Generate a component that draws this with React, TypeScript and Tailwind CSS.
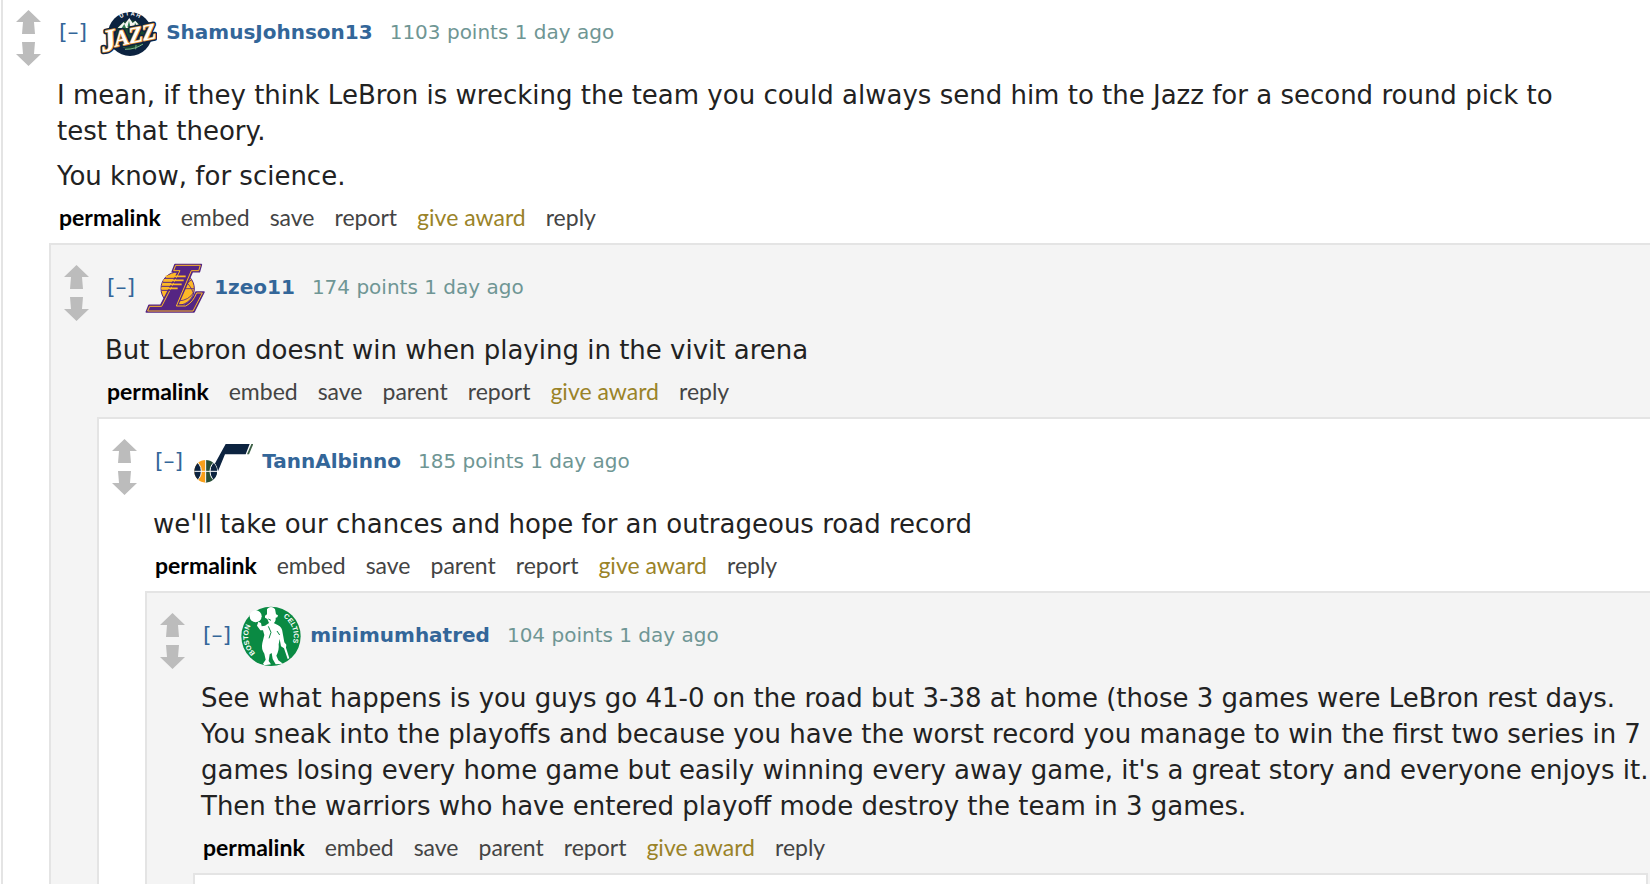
import React from 'react';

interface CommentData {
  author: string;
  points: number;
  age: string;
  flair: React.ReactNode;
  body: string[];
  actions: string[];
}

const JazzLogo = () => (
  <svg viewBox="24 6 180 180" className="w-[60px] h-[60px] shrink-0" role="img" aria-label="Utah Jazz">
    <defs>
      <path id="jazz-arc" d="M73 96 A50 50 0 0 1 173 96" />
    </defs>
    <circle cx="123" cy="102" r="66" fill="#0c2340" />
    <circle cx="124" cy="105" r="44" fill="#16472f" />
    <path d="M86 84 L104 66 L108 71 L121 54 L131 69 L139 62 L158 84 Z" fill="#f4f6f2" />
    <path d="M98 84 L106 72 L111 84 Z M120 62 L125 84 L115 82 Z M138 68 L147 84 L135 84 Z" fill="#2f7b4f" />
    <path d="M104 142 Q128 122 166 124 M108 148 Q140 148 162 132 M136 124 Q144 136 140 148" fill="none" stroke="#7fb38b" strokeWidth="3" />
    <text fill="#ffffff" fontSize="17" fontWeight="700" className="font-['Liberation_Sans']">
      <textPath href="#jazz-arc" startOffset="50%" textAnchor="middle">U T A H</textPath>
    </text>
    <g transform="rotate(-12 116 110)" className="font-['Liberation_Serif']" fontWeight="700" fontStyle="italic">
      <g strokeLinejoin="round" paintOrder="stroke">
        <text x="34" y="140" fontSize="92" fill="#ffffff" stroke="#0c2340" strokeWidth="14">J</text>
        <text x="75" y="132" fontSize="67" fill="#ffffff" stroke="#0c2340" strokeWidth="14">AZZ</text>
        <text x="34" y="140" fontSize="92" fill="#ffffff" stroke="#e39a3b" strokeWidth="5">J</text>
        <text x="75" y="132" fontSize="67" fill="#ffffff" stroke="#e39a3b" strokeWidth="5">AZZ</text>
      </g>
    </g>
  </svg>
);

const LakersLogo = () => (
  <svg viewBox="18 6 180 180" className="w-[60px] h-[60px] shrink-0" role="img" aria-label="Los Angeles Lakers">
    <circle cx="116" cy="101" r="50" fill="#fdb927" stroke="#552583" strokeWidth="3" />
    <path d="M118 142 Q126 92 158 74 M118 101 H166 M132 74 Q154 88 164 116 M118 138 Q150 136 164 112" fill="none" stroke="#552583" strokeWidth="2.5" />
    <path
      d="M108 29 H187 L181 50 H160 L116 150 H138 Q160 138 171 111 H195 L165 171 H22 L30 151 H65 L118 50 H100 Z"
      fill="#552583"
      stroke="#552583"
      strokeWidth="5"
      strokeLinejoin="round"
    />
    <path
      d="M110 31 H184 L179 47 H157 L112 153 H140 Q162 142 173 114 H190 L162 168 H26 L32 154 H68 L123 47 H104 Z"
      fill="#552583"
      stroke="#fdb927"
      strokeWidth="3"
      strokeLinejoin="round"
    />
    <path d="M80 64 H140 M73 76 H134 M69 88 H128 M67 100 H116" fill="none" stroke="#fdb927" strokeWidth="5" />
    <path d="M78 70 H116 M72 82 H110 M68 94 H104 M68 106 H96" fill="none" stroke="#552583" strokeWidth="3" />
  </svg>
);

const JazzNoteLogo = () => (
  <svg viewBox="9 -9 180 180" className="w-[60px] h-[60px] shrink-0" role="img" aria-label="Utah Jazz note">
    <defs>
      <clipPath id="note-ball">
        <circle cx="47" cy="112" r="34" />
      </clipPath>
    </defs>
    <path d="M107 30 H179 L167 61 H105 L84 112 L74 90 Z" fill="#0c2340" />
    <path d="M184 30 H190 L177 61 H171 Z" fill="#3b5f45" />
    <circle cx="47" cy="112" r="36" fill="#ffffff" />
    <g clipPath="url(#note-ball)">
      <rect x="12" y="76" width="35" height="72" fill="#f9a01b" />
      <rect x="47" y="76" width="36" height="72" fill="#274e37" />
      <ellipse cx="12" cy="112" rx="22" ry="30" fill="#0c2340" stroke="#ffffff" strokeWidth="3" />
      <ellipse cx="82" cy="112" rx="22" ry="30" fill="#0c2340" stroke="#ffffff" strokeWidth="3" />
      <path d="M12 112 H82 M47 76 V148" stroke="#ffffff" strokeWidth="3" />
    </g>
  </svg>
);

const CelticsLogo = () => (
  <svg viewBox="18 22 180 180" className="w-[60px] h-[60px] shrink-0 overflow-visible" role="img" aria-label="Boston Celtics">
    <defs>
      <path id="celtics-left" d="M68 172 A69 69 0 0 1 52 76" />
      <path id="celtics-right" d="M131 51 A69 69 0 0 1 167 150" />
    </defs>
    <circle cx="108" cy="116" r="89" fill="#0a8a43" />
    <g fill="#ffffff" fontSize="21" fontWeight="700" className="font-['Liberation_Sans']">
      <text>
        <textPath href="#celtics-left" startOffset="50%" textAnchor="middle">BOSTON</textPath>
      </text>
      <text>
        <textPath href="#celtics-right" startOffset="50%" textAnchor="middle">CELTICS</textPath>
      </text>
    </g>
    <circle cx="62" cy="56" r="18" fill="#ffffff" />
    {/* leprechaun */}
    <path
      d="M96 34 Q108 22 120 34 L123 50 L129 53 L127 59 L122 60 Q123 72 116 76 L128 82 Q142 88 143 106 L148 134 L154 141 L153 150 L163 182 L158 184 L147 152 L138 146 L134 124 L131 140 Q133 158 124 174 L130 188 L144 198 L122 200 L113 184 L110 166 L104 170 L101 190 L108 200 L88 203 L84 198 L92 186 L88 168 Q78 154 82 136 L88 112 L84 98 L76 98 L66 84 L70 72 L78 76 L80 86 L90 84 L102 76 L97 64 L90 60 L90 54 L96 50 Z"
      fill="#ffffff"
    />
    <path d="M100 64 L108 68 M100 86 L108 104 L102 122 M126 100 L134 112" fill="none" stroke="#0a8a43" strokeWidth="3" />
  </svg>
);

const comments: CommentData[] = [
  {
    author: 'ShamusJohnson13',
    points: 1103,
    age: '1 day ago',
    flair: <JazzLogo />,
    body: [
      'I mean, if they think LeBron is wrecking the team you could always send him to the Jazz for a second round pick to test that theory.',
      'You know, for science.',
    ],
    actions: ['permalink', 'embed', 'save', 'report', 'give award', 'reply'],
  },
  {
    author: '1zeo11',
    points: 174,
    age: '1 day ago',
    flair: <LakersLogo />,
    body: ['But Lebron doesnt win when playing in the vivit arena'],
    actions: ['permalink', 'embed', 'save', 'parent', 'report', 'give award', 'reply'],
  },
  {
    author: 'TannAlbinno',
    points: 185,
    age: '1 day ago',
    flair: <JazzNoteLogo />,
    body: ["we'll take our chances and hope for an outrageous road record"],
    actions: ['permalink', 'embed', 'save', 'parent', 'report', 'give award', 'reply'],
  },
  {
    author: 'minimumhatred',
    points: 104,
    age: '1 day ago',
    flair: <CelticsLogo />,
    body: [
      "See what happens is you guys go 41-0 on the road but 3-38 at home (those 3 games were LeBron rest days. You sneak into the playoffs and because you have the worst record you manage to win the first two series in 7 games losing every home game but easily winning every away game, it's a great story and everyone enjoys it. Then the warriors who have entered playoff mode destroy the team in 3 games.",
    ],
    actions: ['permalink', 'embed', 'save', 'parent', 'report', 'give award', 'reply'],
  },
];

const actionClass = (action: string) => {
  if (action === 'permalink') return 'font-bold text-black';
  if (action === 'give award') return 'text-[#9a8328]';
  return 'text-[#444444]';
};

const VoteArrows = () => (
  <div className="flex flex-col gap-2 pt-2 w-[25px] shrink-0">
    <button aria-label="upvote">
      <svg viewBox="0 0 25 24" className="block w-[25px] h-6" fill="#bcbcbc">
        <path d="M12.5 0 L25 12 H18 L19 24 H6 L7 12 H0 Z" />
      </svg>
    </button>
    <button aria-label="downvote">
      <svg viewBox="0 0 25 24" className="block w-[25px] h-6" fill="#bcbcbc">
        <path d="M12.5 24 L25 12 H18 L19 0 H6 L7 12 H0 Z" />
      </svg>
    </button>
  </div>
);

const Comment: React.FC<{ depth: number }> = ({ depth }) => {
  const data = comments[depth];

  // the next reply starts below the fold
  if (!data) {
    return <div className="ml-[46px] mr-[2px] h-12 border-2 border-[#e4e4e4] bg-white" />;
  }

  return (
    <article
      className={`border-l-2 border-[#e4e4e4] ${depth % 2 ? 'bg-[#f4f4f4]' : 'bg-white'} ${
        depth === 0 ? 'ml-px pt-[2px] min-h-screen' : 'ml-[46px] border-t-2 pt-3'
      }`}
    >
      <div className="flex gap-4 pl-[13px] pb-3">
        <VoteArrows />
        <div className="flex-1 min-w-0">
          <header className="flex items-center h-[60px] text-xl whitespace-nowrap">
            <button aria-label="collapse" className="pl-[2px] mr-[10px] text-[22px] text-[#336699]">[–]</button>
            {data.flair}
            <a href="#" className="ml-[9px] font-bold text-[#336699]">{data.author}</a>
            <span className="ml-[17px] text-[#6f9694]">{data.points} points {data.age}</span>
          </header>

          <div className="mt-[15px] flex flex-col gap-[9px] max-w-[1520px] text-[26px] leading-9 text-[#222222]">
            {data.body.map((text) => (
              <p key={text}>{text}</p>
            ))}
          </div>

          <ul className="mt-[9px] flex gap-5 pl-[2px] font-['Lato',sans-serif] text-[23px] leading-7 whitespace-nowrap">
            {data.actions.map((action) => (
              <li key={action}>
                <a href="#" className={actionClass(action)}>{action}</a>
              </li>
            ))}
          </ul>
        </div>
      </div>
      <Comment depth={depth + 1} />
    </article>
  );
};

export default function App() {
  return (
    <main className="h-screen overflow-hidden bg-white font-['DejaVu_Sans',sans-serif]">
      <Comment depth={0} />
    </main>
  );
}
